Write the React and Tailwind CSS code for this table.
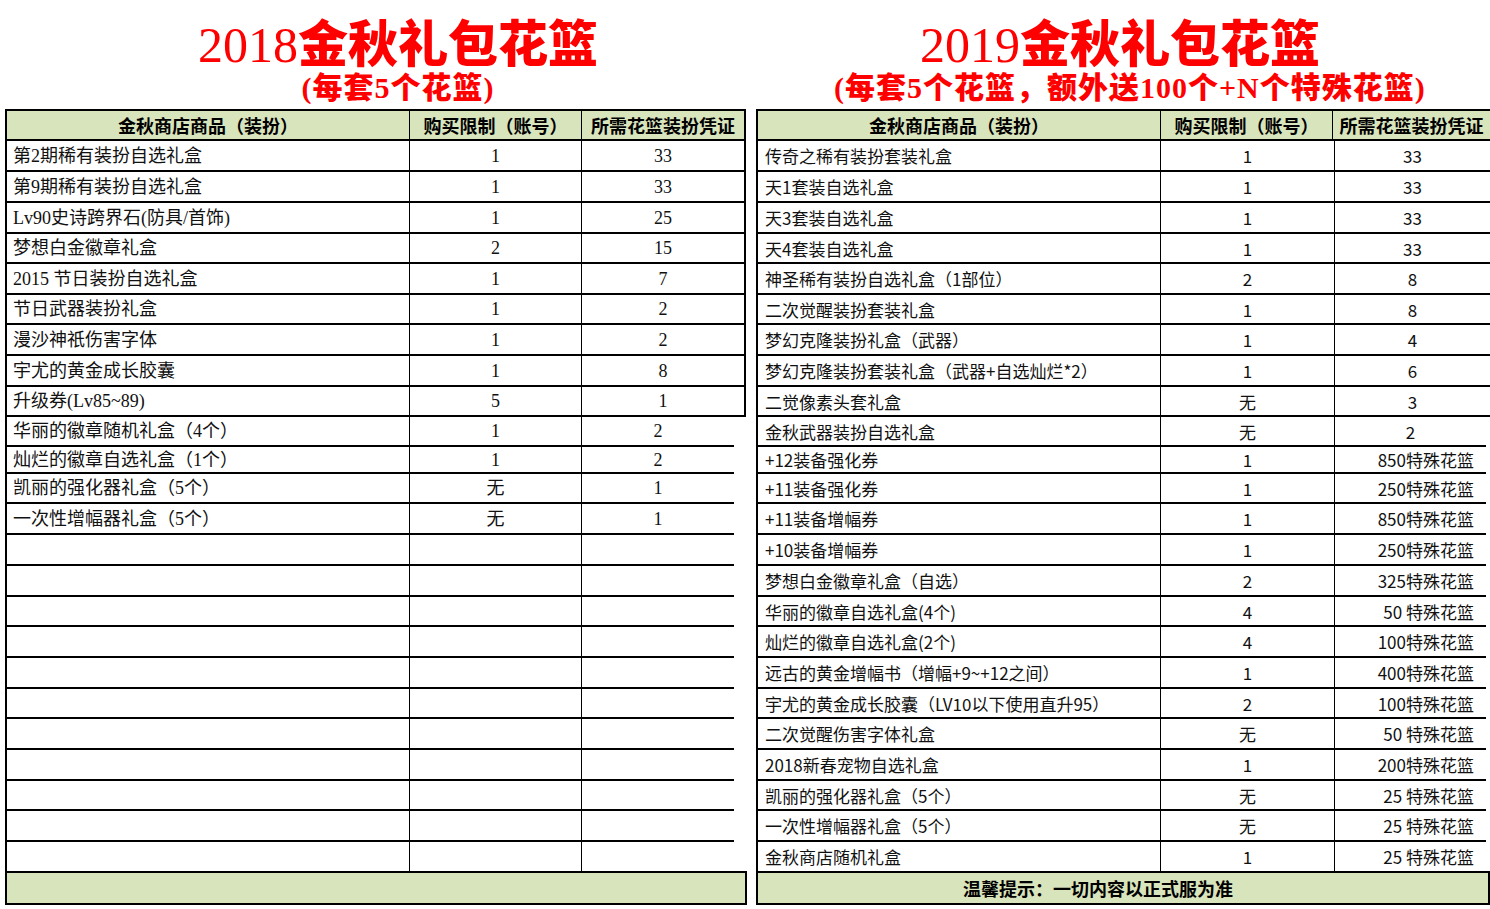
import React from "react";

const heights = [
  "h-[31px]", "h-[31px]", "h-[31px]", "h-[30px]", "h-[31px]", "h-[30px]",
  "h-[31px]", "h-[31px]", "h-[30px]", "h-[30px]", "h-[27px]", "h-[30px]",
  "h-[31px]", "h-[31px]", "h-[31px]", "h-[30px]", "h-[31px]", "h-[31px]",
  "h-[30px]", "h-[31px]", "h-[31px]", "h-[30px]", "h-[31px]", "h-[29px]",
];

const leftRows = [
  ["第2期稀有装扮自选礼盒", "1", "33"],
  ["第9期稀有装扮自选礼盒", "1", "33"],
  ["Lv90史诗跨界石(防具/首饰)", "1", "25"],
  ["梦想白金徽章礼盒", "2", "15"],
  ["2015 节日装扮自选礼盒", "1", "7"],
  ["节日武器装扮礼盒", "1", "2"],
  ["漫沙神祇伤害字体", "1", "2"],
  ["宇尤的黄金成长胶囊", "1", "8"],
  ["升级券(Lv85~89)", "5", "1"],
  ["华丽的徽章随机礼盒（4个）", "1", "2"],
  ["灿烂的徽章自选礼盒（1个）", "1", "2"],
  ["凯丽的强化器礼盒（5个）", "无", "1"],
  ["一次性增幅器礼盒（5个）", "无", "1"],
  ["", "", ""], ["", "", ""], ["", "", ""], ["", "", ""], ["", "", ""], ["", "", ""],
  ["", "", ""], ["", "", ""], ["", "", ""], ["", "", ""], ["", "", ""],
];

const rightRows = [
  ["传奇之稀有装扮套装礼盒", "1", "33"],
  ["天1套装自选礼盒", "1", "33"],
  ["天3套装自选礼盒", "1", "33"],
  ["天4套装自选礼盒", "1", "33"],
  ["神圣稀有装扮自选礼盒（1部位）", "2", "8"],
  ["二次觉醒装扮套装礼盒", "1", "8"],
  ["梦幻克隆装扮礼盒（武器）", "1", "4"],
  ["梦幻克隆装扮套装礼盒（武器+自选灿烂*2）", "1", "6"],
  ["二觉像素头套礼盒", "无", "3"],
  ["金秋武器装扮自选礼盒", "无", "2"],
  ["+12装备强化券", "1", "850特殊花篮"],
  ["+11装备强化券", "1", "250特殊花篮"],
  ["+11装备增幅券", "1", "850特殊花篮"],
  ["+10装备增幅券", "1", "250特殊花篮"],
  ["梦想白金徽章礼盒（自选）", "2", "325特殊花篮"],
  ["华丽的徽章自选礼盒(4个)", "4", "50 特殊花篮"],
  ["灿烂的徽章自选礼盒(2个)", "4", "100特殊花篮"],
  ["远古的黄金增幅书（增幅+9~+12之间）", "1", "400特殊花篮"],
  ["宇尤的黄金成长胶囊（LV10以下使用直升95）", "2", "100特殊花篮"],
  ["二次觉醒伤害字体礼盒", "无", "50 特殊花篮"],
  ["2018新春宠物自选礼盒", "1", "200特殊花篮"],
  ["凯丽的强化器礼盒（5个）", "无", "25 特殊花篮"],
  ["一次性增幅器礼盒（5个）", "无", "25 特殊花篮"],
  ["金秋商店随机礼盒", "1", "25 特殊花篮"],
];

// split a title into CJK runs (heavy sans) and latin runs (serif)
function Mixed({ text, latin }) {
  const parts = text.split(/([\u3000-\u9fff\uff00-\uffef]+)/).filter(Boolean);
  return parts.map((p, i) =>
    /[\u3000-\u9fff\uff00-\uffef]/.test(p) ? (
      <span key={i} className="font-['Noto_Sans_CJK_SC',sans-serif] font-black">
        {p}
      </span>
    ) : (
      <span key={i} className={"font-['Liberation_Serif',serif] " + latin}>
        {p}
      </span>
    )
  );
}

function Header() {
  return (
    <div className="flex h-[32px] border-t-2 border-b-2 border-black bg-[#d8e4bc] font-['Noto_Sans_CJK_SC',sans-serif] text-[18px] font-bold text-black leading-none">
      <div className="w-[403px] border-r border-black flex items-center justify-center">
        金秋商店商品（装扮）
      </div>
      <div className="w-[172px] border-r border-black flex items-center justify-center">
        购买限制（账号）
      </div>
      <div className="flex-1 flex items-center justify-center whitespace-nowrap">
        所需花篮装扮凭证
      </div>
    </div>
  );
}

function LeftTable() {
  return (
    <div className="ml-[5px] w-[741px] shrink-0">
      <div className="flex flex-col items-center h-[109px] pt-[15px] pl-[45px] text-[#ff0000]">
        <div className="text-[50px] leading-[50px] whitespace-nowrap">
          <Mixed text="2018金秋礼包花篮" latin="font-normal" />
        </div>
        <div className="text-[30px] leading-[30px] tracking-[1px] whitespace-nowrap">
          <Mixed text="(每套5个花篮)" latin="font-bold" />
        </div>
      </div>
      <div className="border-l-2 border-black">
        <div className="border-r-2 border-black">
          <Header />
        </div>
        {leftRows.map((r, i) => {
          const short = i >= 9;
          const last = i === leftRows.length - 1;
          return (
            <div
              key={i}
              className={
                "flex font-['Liberation_Serif','Noto_Sans_CJK_SC',serif] text-[18px] text-[#111] leading-none " +
                heights[i] +
                (last ? "" : " border-b-2 border-black") +
                (short ? " w-[727px]" : " border-r-2")
              }
            >
              <div className="w-[403px] border-r border-black flex items-center pl-[6px] whitespace-nowrap">
                {r[0]}
              </div>
              <div className="w-[172px] border-r border-black flex items-center justify-center">
                {r[1]}
              </div>
              <div className="flex-1 flex items-center justify-center">{r[2]}</div>
            </div>
          );
        })}
      </div>
      <div className="h-[34px] w-[742px] border-2 border-black bg-[#d8e4bc]"></div>
    </div>
  );
}

function RightTable() {
  return (
    <div className="ml-[10px] w-[734px] shrink-0">
      <div className="flex flex-col h-[109px] pt-[15px] text-[#ff0000]">
        <div className="text-[50px] leading-[50px] whitespace-nowrap pl-[164px]">
          <Mixed text="2019金秋礼包花篮" latin="font-normal" />
        </div>
        <div className="text-[30px] leading-[30px] tracking-[1px] whitespace-nowrap pl-[78px]">
          <Mixed text="(每套5个花篮，额外送100个+N个特殊花篮)" latin="font-bold" />
        </div>
      </div>
      <div className="border-l-2 border-black">
        <Header />
        {rightRows.map((r, i) => {
          const short = i >= 9;
          const last = i === rightRows.length - 1;
          return (
            <div
              key={i}
              className={
                "flex font-['Noto_Sans_CJK_SC',sans-serif] text-[17px] text-[#111] leading-none " +
                heights[i] +
                (last ? "" : " border-b-2 border-black") +
                (short ? " w-[728px]" : "")
              }
            >
              <div className="w-[403px] border-r border-black flex items-center pl-[7px] whitespace-nowrap">
                {r[0]}
              </div>
              <div className="w-[174px] border-r border-black flex items-center justify-center">
                {r[1]}
              </div>
              <div
                className={
                  "flex-1 flex items-center whitespace-pre " +
                  (i >= 10 ? "justify-end pr-[12px]" : "justify-center")
                }
              >
                {r[2]}
              </div>
            </div>
          );
        })}
      </div>
      <div className="h-[34px] border-2 border-black bg-[#d8e4bc] flex items-center justify-center pr-[50px] font-['Noto_Sans_CJK_SC',sans-serif] text-[18px] font-bold text-black leading-none">
        温馨提示：一切内容以正式服为准
      </div>
    </div>
  );
}

export default function App() {
  return (
    <div className="w-[1490px] h-[909px] overflow-hidden bg-white flex">
      <LeftTable />
      <RightTable />
    </div>
  );
}
